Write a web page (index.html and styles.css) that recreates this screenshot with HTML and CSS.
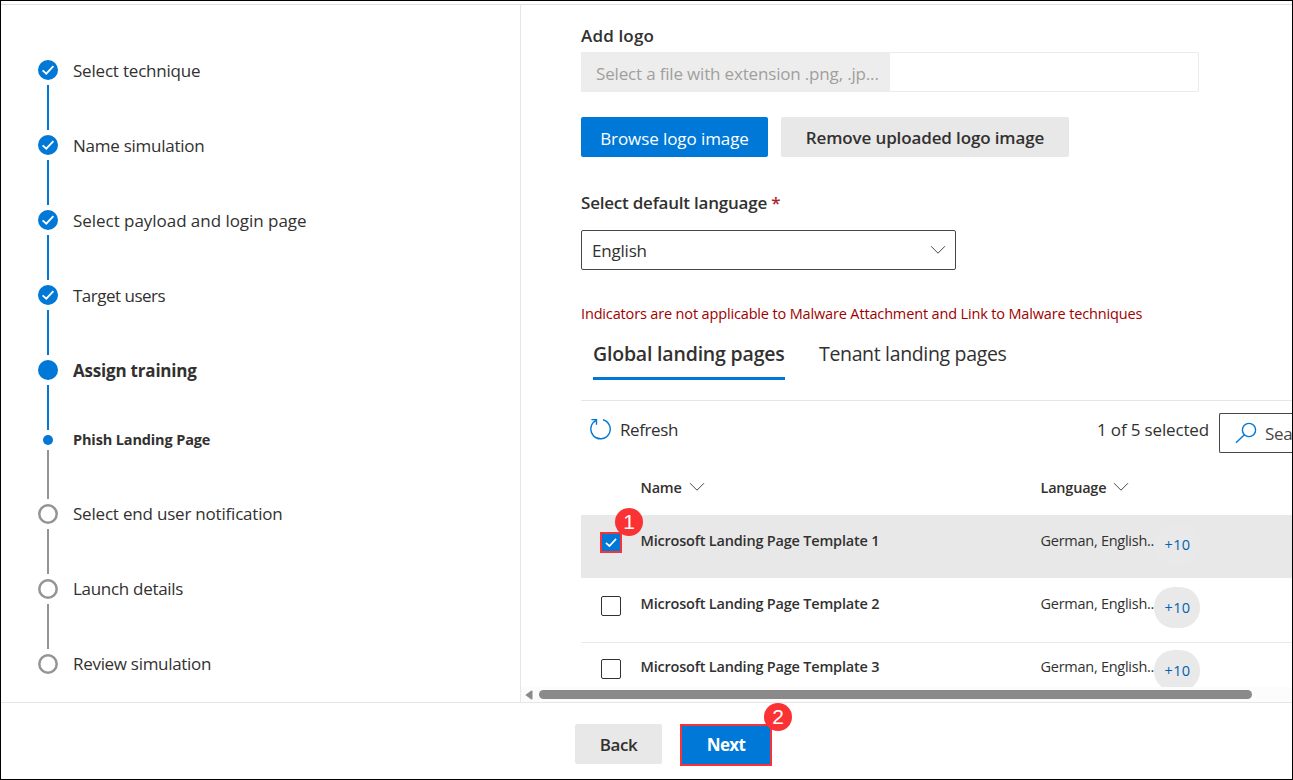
FILE: index.html
```html
<!DOCTYPE html>
<html lang="en">
<head>
<meta charset="utf-8">
<title>Assign training</title>
<link rel="stylesheet" href="styles.css">
</head>
<body>
<svg class="defs" aria-hidden="true">
  <symbol id="check" viewBox="0 0 20 20"><path d="M4.6 10.3 8.3 13.7 15.4 6.1" fill="none" stroke="#fff" stroke-width="1.8"/></symbol>
  <symbol id="chevron" viewBox="0 0 16 10"><path d="M1 1.2 8 8.2 15 1.2" fill="none" stroke="#4a4a4a" stroke-width="1"/></symbol>
</svg>
<div class="app">
  <div class="topline"></div>
  <div class="body">
    <aside class="steps">
      <div class="step done"><svg class="dot"><use href="#check"/></svg><span class="name t22">Select technique</span></div>
      <div class="line"></div>
      <div class="step done"><svg class="dot"><use href="#check"/></svg><span class="name t25">Name simulation</span></div>
      <div class="line"></div>
      <div class="step done"><svg class="dot"><use href="#check"/></svg><span class="name t05">Select payload and login page</span></div>
      <div class="line"></div>
      <div class="step done"><svg class="dot"><use href="#check"/></svg><span class="name t40">Target users</span></div>
      <div class="line"></div>
      <div class="step done"><span class="dot"></span><span class="name current">Assign training</span></div>
      <div class="line"></div>
      <div class="step sub"><span class="dot"></span><span class="name">Phish Landing Page</span></div>
      <div class="line todo long"></div>
      <div class="step todo"><svg class="ring" viewBox="0 0 20 20"><circle cx="10" cy="10" r="8.7"/></svg><span class="name t22">Select end user notification</span></div>
      <div class="line todo"></div>
      <div class="step todo"><svg class="ring" viewBox="0 0 20 20"><circle cx="10" cy="10" r="8.7"/></svg><span class="name t30">Launch details</span></div>
      <div class="line todo"></div>
      <div class="step todo"><svg class="ring" viewBox="0 0 20 20"><circle cx="10" cy="10" r="8.7"/></svg><span class="name t30">Review simulation</span></div>
    </aside>
    <main class="main">
      <div class="content">
        <div class="label logo">Add logo</div>
        <div class="file"><div class="placeholder">Select a file with extension .png, .jp...</div></div>
        <div class="buttons">
          <div class="btn browse">Browse logo image</div>
          <div class="btn remove">Remove uploaded logo image</div>
        </div>
        <div class="label language">Select default language <span class="star">*</span></div>
        <div class="select"><span>English</span><svg class="chevron"><use href="#chevron"/></svg></div>
        <div class="warning">Indicators are not applicable to Malware Attachment and Link to Malware techniques</div>
        <div class="tabs">
          <div class="tab active">Global landing pages</div>
          <div class="tab">Tenant landing pages</div>
        </div>
        <div class="toolbar">
          <svg class="refresh-icon" viewBox="0 0 22 22"><path d="M7.2 2.4A9.7 9.7 0 1 0 14 1.7M2.4 1.6H7.5V6.8" fill="none" stroke="#0078d4" stroke-width="1.4"/></svg>
          <span class="refresh">Refresh</span>
          <span class="count">1 of 5 selected</span>
          <div class="search"><svg class="search-icon" viewBox="0 0 22 22"><circle cx="14" cy="8" r="6.6" fill="none" stroke="#0078d4" stroke-width="1.4"/><path d="M9.4 12.7 1 20.8" stroke="#0078d4" stroke-width="1.4"/></svg><span>Sea</span></div>
        </div>
        <div class="row head">
          <span></span>
          <span class="col">Name<svg class="chevron"><use href="#chevron"/></svg></span>
          <span class="col">Language<svg class="chevron"><use href="#chevron"/></svg></span>
        </div>
        <div class="row selected">
          <span class="box checked"><svg viewBox="1 1 18 18"><use href="#check" width="20" height="20"/></svg><span class="badge one">1</span></span>
          <span class="title">Microsoft Landing Page Template 1</span>
          <span class="lang"><span>German, English..</span><span class="pill">+10</span></span>
        </div>
        <div class="row second">
          <span class="box"></span>
          <span class="title">Microsoft Landing Page Template 2</span>
          <span class="lang"><span>German, English..</span><span class="pill">+10</span></span>
        </div>
        <div class="row third">
          <span class="box"></span>
          <span class="title">Microsoft Landing Page Template 3</span>
          <span class="lang"><span>German, English..</span><span class="pill">+10</span></span>
        </div>
      </div>
      <div class="scrollbar">
        <svg class="arrow" viewBox="0 0 8 10"><path d="M0.3 5 6 0.8Q7.5 0 7.5 1.5V8.5Q7.5 10 6 9.2Z" fill="#8a8a8a"/></svg>
        <div class="thumb"></div>
      </div>
    </main>
  </div>
  <footer class="footer">
    <div class="btn back">Back</div>
    <div class="next">Next<span class="badge two">2</span></div>
  </footer>
</div>
</body>
</html>
```
FILE: styles.css
```css
* { box-sizing: border-box; }
body {
  margin: 0;
  background: #fff;
  color: #323130;
  font: 17px/24px "Open Sans", "Noto Sans", sans-serif;
  white-space: nowrap;
}
.defs { display: none; }
.app {
  width: 1293px;
  height: 780px;
  border: 1px solid #000;
  display: flex;
  flex-direction: column;
  overflow: hidden;
}
.topline { height: 4px; border-bottom: 1px solid #e1dfdf; }
.body { height: 697px; display: flex; }

/* Wizard steps */
.steps {
  flex: none;
  width: 520px;
  padding: 55px 0 0 37px;
  border-right: 1px solid #e6e6e6;
}
.step { display: flex; align-items: center; height: 20px; gap: 15px; }
.dot {
  flex: none;
  width: 20px;
  height: 20px;
  border-radius: 50%;
  background: #0078d7;
}
.ring {
  flex: none;
  width: 20px;
  height: 20px;
  fill: none;
  stroke: #949494;
  stroke-width: 2.5px;
}
.step .name { padding-top: 1px; }
.step.todo .name { padding: 0 0 1px; }
.t05 { letter-spacing: -0.04px; }
.t22 { letter-spacing: -0.2px; }
.t25 { letter-spacing: -0.25px; }
.t30 { letter-spacing: -0.3px; }
.t40 { letter-spacing: -0.5px; }
.step .current { font-weight: 700; letter-spacing: -0.2px; padding-top: 2px; }
.sub { height: 10px; gap: 20px; padding-left: 5px; }
.sub .dot { width: 10px; height: 10px; }
.sub .name { font-size: 14.5px; font-weight: 700; letter-spacing: -0.14px; padding: 0; }
.line { width: 2px; height: 45px; margin: 5px 0 5px 9px; background: #0078d7; }
.line.todo { background: #949494; }
.line.long { height: 49px; }

/* Landing page form */
.main { flex: 1; min-width: 0; }
.content { height: 682px; padding: 18px 0 0 60px; overflow: hidden; }
.label { font-weight: 600; }
.logo { height: 29px; padding-top: 1px; letter-spacing: 0.16px; }
.file {
  width: 618px;
  height: 40px;
  border: 1px solid #edebe9;
  border-radius: 2px;
}
.placeholder {
  width: 309px;
  height: 40px;
  margin: -1px;
  padding: 10px 15px;
  background: #ededed;
  color: #a19f9d;
  letter-spacing: -0.17px;
}
.buttons { display: flex; gap: 13px; margin-top: 25px; }
.btn {
  height: 40px;
  border-radius: 2px;
  background: #e8e8e8;
  line-height: 41px;
  text-align: center;
  font-weight: 600;
}
.browse { width: 187px; background: #0078d7; color: #fff; font-weight: 400; letter-spacing: -0.08px; line-height: 43px; }
.remove { width: 288px; letter-spacing: -0.13px; }
.language { height: 40px; margin-top: 33px; padding-top: 1px; letter-spacing: -0.22px; }
.star { color: #a4262c; }
.select {
  display: flex;
  align-items: center;
  justify-content: space-between;
  width: 375px;
  height: 40px;
  padding: 1px 9px 0 10px;
  border: 1px solid #484644;
  border-radius: 2px;
  letter-spacing: -0.2px;
}
.chevron { width: 16px; height: 10px; }
.select .chevron { margin-top: -2px; }
.warning {
  height: 24px;
  margin-top: 32px;
  color: #a00000;
  font-size: 14.5px;
  letter-spacing: -0.15px;
}
.tabs { display: flex; gap: 34px; padding-left: 12px; height: 74px; border-bottom: 1px solid #e6e6e6; margin-top: 1px; }
.tab { height: 53px; padding-top: 14px; font-size: 19.5px; line-height: 26px; letter-spacing: -0.34px; }
.tab.active { width: 192px; font-weight: 600; letter-spacing: -0.19px; border-bottom: 3px solid #0078d7; }
.toolbar { display: flex; height: 64px; padding: 12px 0 0 8px; }
.refresh-icon { flex: none; width: 22px; height: 22px; margin-top: 5px; }
.refresh { flex: none; width: 477px; padding: 5px 0 0 9px; letter-spacing: -0.4px; }
.count { flex: none; width: 131px; padding: 5px 0 0 9px; letter-spacing: -0.15px; }
.search {
  flex: 1;
  display: flex;
  height: 40px;
  padding: 8px 0 0 15px;
  border: 1px solid #484644;
  border-right: 0;
  border-radius: 2px 0 0 2px;
}
.search-icon { flex: none; width: 22px; height: 22px; margin-right: 8px; }
.search span { color: #484644; letter-spacing: -0.3px; }

/* Landing page list */
.row {
  display: grid;
  grid-template-columns: 59.5px 400px 400px;
  width: 860px;
  height: 63px;
  padding-top: 16px;
  font-size: 14.5px;
  line-height: 20px;
}
.head { height: 50px; padding-top: 13px; font-weight: 600; letter-spacing: -0.22px; }
.head .chevron { margin-left: 7px; vertical-align: 1px; }
.selected { background: #e8e8e8; }
.second { height: 65px; border-bottom: 1px solid #e9e9e9; }
.third { padding-top: 14px; }
.title { font-weight: 600; letter-spacing: -0.2px; }
.lang { display: flex; letter-spacing: -0.26px; }
.lang > span:first-child { width: 113.5px; }
.pill {
  width: 46px;
  height: 41px;
  margin-top: -7px;
  padding-left: 1px;
  border-radius: 20px;
  background: #e9e9e9;
  color: #0062b1;
  text-align: center;
  line-height: 41px;
  letter-spacing: 0.3px;
}
.box {
  width: 20px;
  height: 20px;
  margin: 2px 0 0 20px;
  border: 1px solid #323130;
  border-radius: 2px;
}
.box.checked {
  position: relative;
  width: 22px;
  height: 21px;
  margin: 1px 0 0 19px;
  border: 2px solid #f5333a;
  border-radius: 0;
  background: #0078d7;
}
.box svg { display: block; width: 18px; height: 17px; }
.badge {
  position: absolute;
  width: 28px;
  height: 28px;
  border-radius: 50%;
  background: #fa3234;
  color: #fff;
  font: 400 21px/28px "Liberation Sans", sans-serif;
  letter-spacing: 0;
  text-align: center;
}
.one { left: 13px; top: -26px; }

.scrollbar { display: flex; align-items: center; gap: 6px; height: 15px; padding-left: 4px; background: #fcfcfc; }
.arrow { width: 8px; height: 10px; }
.thumb { width: 713px; height: 9px; border-radius: 5px; background: #8a8a8a; }

.footer { display: flex; gap: 18px; height: 77px; padding: 21px 0 0 574px; border-top: 1px solid #e6e6e6; }
.back { width: 87px; letter-spacing: -0.4px; }
.next {
  position: relative;
  width: 92px;
  height: 42px;
  border: 2px solid #f5333a;
  background: #0078d7;
  color: #fff;
  font-weight: 700;
  line-height: 38px;
  text-align: center;
  letter-spacing: -0.6px;
}
.two { left: 82px; top: -23px; }
```
